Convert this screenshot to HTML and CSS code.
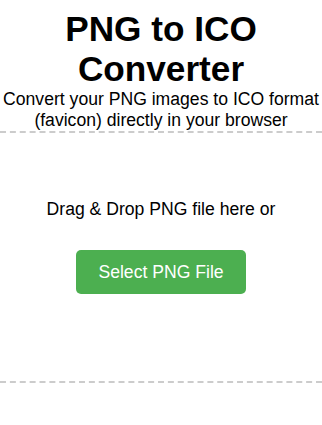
FILE: index.html
```html
<!DOCTYPE html>
<html lang="en">
<head>
<meta charset="utf-8">
<title>PNG to ICO Converter</title>
<link rel="stylesheet" href="styles.css">
</head>
<body>
<div class="page">
  <h1 class="title">PNG to ICO Converter</h1>
  <p class="subtitle">Convert your PNG images to ICO format (favicon) directly in your browser</p>
  <div class="dropzone">
    <p class="drop-text">Drag &amp; Drop PNG file here or</p>
    <button class="select-btn" type="button">Select PNG File</button>
  </div>
</div>
</body>
</html>
```

FILE: styles.css
```css
html, body {
  margin: 0;
  background: #fff;
}

body {
  font-family: "Liberation Sans", Arial, sans-serif;
  color: #000;
}

.page {
  padding-top: 8.6px;
  text-align: center;
}

.title {
  margin: 0;
  font-size: 35.2px;
  font-weight: bold;
  line-height: normal;
}

.subtitle {
  margin: 0;
  font-size: 17.6px;
  line-height: normal;
}

.dropzone {
  border-top: 2px dashed #ccc;
  border-bottom: 2px dashed #ccc;
  padding: 66.5px 0 87.3px;
  display: flex;
  flex-direction: column;
  align-items: center;
  gap: 30.3px;
}

.drop-text {
  margin: 0;
  font-size: 17.6px;
  line-height: normal;
}

.select-btn {
  background: #4caf50;
  color: #fff;
  border: none;
  border-radius: 5px;
  font-family: inherit;
  font-size: 17.6px;
  line-height: normal;
  padding: 11.25px 22px;
  cursor: pointer;
}
```
